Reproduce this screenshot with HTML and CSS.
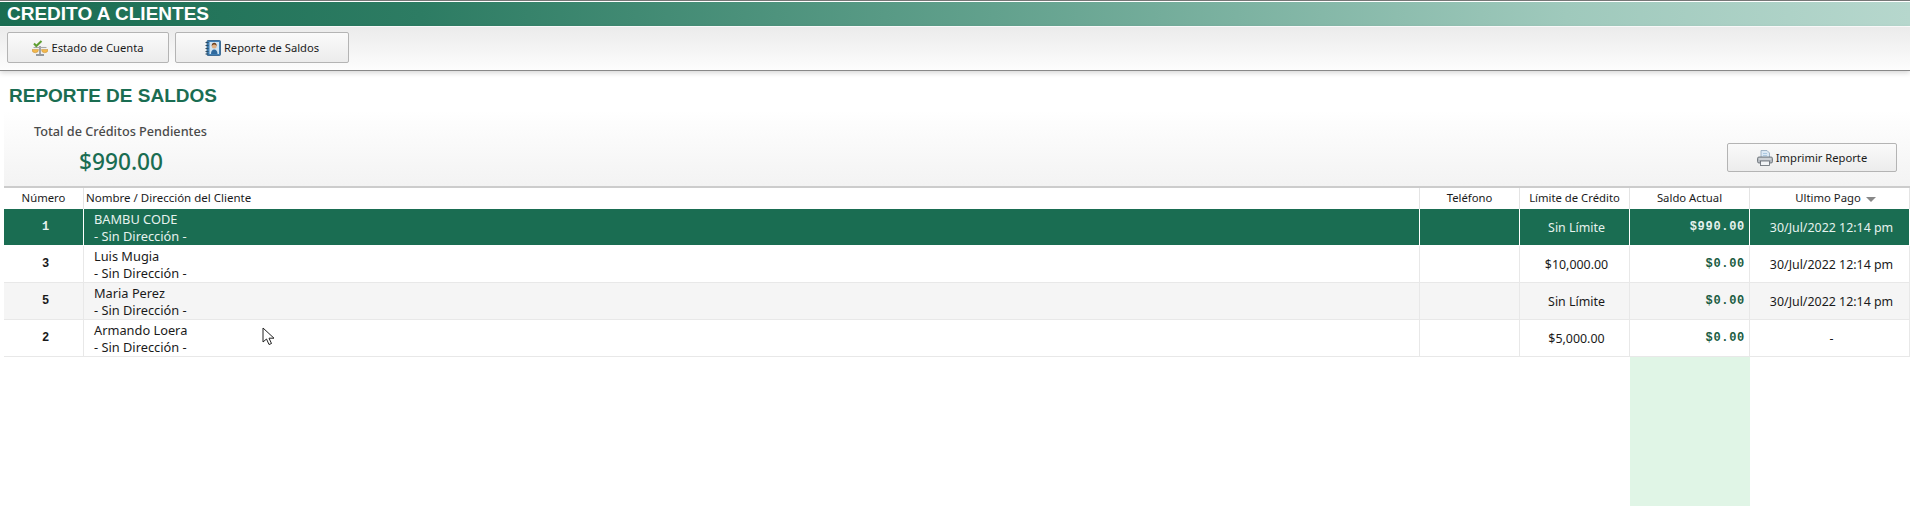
FILE: index.html
```html
<!doctype html>
<html lang="es">
<head>
  <meta charset="UTF-8" />
  <title>Credito a Clientes</title>
  <link rel="stylesheet" href="styles.css">
</head>
<body>
  <!-- Title bar -->
  <header class="app-title">CREDITO A CLIENTES</header>

  <!-- Toolbar -->
  <div class="toolbar">
    <button class="btn btn-estado">
      <svg class="btn-icon" width="16" height="16" viewBox="0 0 16 16" aria-hidden="true">
        <path d="M8 6v8" stroke="#8a8f94" stroke-width="1.6" fill="none"/>
        <path d="M4 15h8" stroke="#7d8389" stroke-width="1.6"/>
        <path d="M1.500 7.500h13" stroke="#a8a8a8" stroke-width="1.100"/>
        <path d="M0 9.500h6.500a3.250 3.250 0 0 1-6.500 0zM9.500 9.500H16a3.250 3.250 0 0 1-6.500 0z" fill="#f3b74a" stroke="#c08f3c" stroke-width=".5"/>
        <path d="M2 3.500l2.300 2.500L9.500 1" stroke="#5f9e32" stroke-width="2" fill="none"/>
      </svg>
      Estado de Cuenta
    </button>
    <button class="btn btn-reporte">
      <svg class="btn-icon" width="16" height="16" viewBox="0 0 16 16" aria-hidden="true">
        <rect x="2" y="0.500" width="13.500" height="15" rx="1" fill="#3f7fb5" stroke="#2b5a85" stroke-width=".8"/>
        <rect x="4.500" y="2" width="9.500" height="12" fill="#cfe3f2"/>
        <path d="M0.500 2.500h3M0.500 5.500h3M0.500 8.500h3M0.500 11.500h3M0.500 14h3" stroke="#2e4f66" stroke-width="1.100"/>
        <path d="M6 14c0-3 1.200-4.500 3.200-4.500S12.500 11 12.500 14z" fill="#2f6a9e"/>
        <circle cx="9.200" cy="6" r="2.500" fill="#e0b083"/>
        <path d="M6.700 6c0-2.200 1-3.200 2.500-3.200s2.500 1 2.500 3.200c-.8-1-2-1.400-2.500-1.400S7.500 5 6.700 6z" fill="#6b3f1e"/>
      </svg>
      Reporte de Saldos
    </button>
  </div>

  <main class="content">
    <h1 class="page-title">REPORTE DE SALDOS</h1>

    <section class="summary">
      <div class="summary-total">
        <p class="summary-label">Total de Créditos Pendientes</p>
        <p class="summary-value">$990.00</p>
      </div>
      <button class="btn btn-print">
        <svg class="btn-icon" width="16" height="16" viewBox="0 0 16 16" aria-hidden="true">
          <path d="M4 .500h6l2.500 2.500v6H4z" fill="#dbe8f4" stroke="#8fa6bb" stroke-width=".8"/>
          <path d="M6 3.500h4M6 5.500h4" stroke="#9fc0dc" stroke-width=".8"/>
          <rect x="0.500" y="7" width="15" height="6" rx="1.500" fill="#b4b9bf" stroke="#61686f" stroke-width=".8"/>
          <rect x="3.500" y="11" width="9" height="4.500" fill="#f2f4f6" stroke="#61686f" stroke-width=".8"/>
          <path d="M2 9h12" stroke="#e5e8eb" stroke-width="1"/>
        </svg>
        Imprimir Reporte
      </button>
    </section>

    <table class="report">
      <colgroup>
        <col class="col-num"><col class="col-name"><col class="col-tel">
        <col class="col-limit"><col class="col-saldo"><col class="col-pago">
      </colgroup>
      <thead>
        <tr>
          <th>Número</th>
          <th class="th-name">Nombre / Dirección del Cliente</th>
          <th>Teléfono</th>
          <th>Límite de Crédito</th>
          <th>Saldo Actual</th>
          <th class="th-pago">Ultimo Pago <span class="sort-arrow"></span></th>
        </tr>
      </thead>
      <tbody>
        <tr class="selected">
          <td class="num">1</td>
          <td class="name">BAMBU CODE<br>- Sin Dirección -</td>
          <td></td>
          <td class="center">Sin Límite</td>
          <td class="saldo">$990.00</td>
          <td class="center">30/Jul/2022 12:14 pm</td>
        </tr>
        <tr>
          <td class="num">3</td>
          <td class="name">Luis Mugia<br>- Sin Dirección -</td>
          <td></td>
          <td class="center">$10,000.00</td>
          <td class="saldo">$0.00</td>
          <td class="center">30/Jul/2022 12:14 pm</td>
        </tr>
        <tr class="alt">
          <td class="num">5</td>
          <td class="name">Maria Perez<br>- Sin Dirección -</td>
          <td></td>
          <td class="center">Sin Límite</td>
          <td class="saldo">$0.00</td>
          <td class="center">30/Jul/2022 12:14 pm</td>
        </tr>
        <tr>
          <td class="num">2</td>
          <td class="name">Armando Loera<br>- Sin Dirección -</td>
          <td></td>
          <td class="center">$5,000.00</td>
          <td class="saldo">$0.00</td>
          <td class="center">-</td>
        </tr>
        <tr class="filler">
          <td></td><td></td><td></td><td></td><td class="saldo-fill"></td><td></td>
        </tr>
      </tbody>
    </table>
  </main>

  <!-- Mouse pointer caught in the capture -->
  <svg class="pointer" width="13" height="20" viewBox="0 0 13 20" aria-hidden="true">
    <path d="M1 1v14l3.500-3 2.500 5.500 2.500-1-2.500-5.300H12z" fill="#fff" stroke="#222" stroke-width="1"/>
  </svg>
</body>
</html>
```

FILE: styles.css
```css
/* ------------------ Reset & Globals ------------------ */
* {
  margin: 0;
  padding: 0;
  box-sizing: border-box;
}
html, body {
  height: 506px;
  overflow: hidden;
}
body {
  font-family: 'Noto Sans', 'Open Sans', sans-serif;
  font-size: 12px;
  background: #fff;
  color: #1a1a1a;
  position: relative;
  border-top: 1px solid #777;
}

/* ------------------ Title bar ------------------ */
.app-title {
  margin-top: 1px;
  height: 24px;
  padding-left: 7px;
  font-family: 'Liberation Sans', Arial, sans-serif;
  font-weight: bold;
  font-size: 19px;
  line-height: 24px;
  color: #fff;
  background: linear-gradient(to right, #1a6d52 0%, #2d7c63 22%, #62a18d 52%, #9fc9bc 82%, #b6d7cd 100%);
}

/* ------------------ Toolbar ------------------ */
.toolbar {
  margin-top: 1px;
  height: 44px;
  padding: 5px 7px 0;
  display: flex;
  gap: 6px;
  align-items: flex-start;
  background: linear-gradient(to bottom, #ebebeb, #fdfdfd);
  border-bottom: 1px solid #888;
  box-shadow: 0 2px 5px rgba(0, 0, 0, 0.16);
}
.btn {
  display: flex;
  align-items: center;
  justify-content: center;
  gap: 3px;
  height: 31px;
  font-family: inherit;
  font-size: 11.200px;
  color: #1a1a1a;
  background: linear-gradient(to bottom, #fafafa, #ececec);
  border: 1px solid #b4b4b4;
  border-radius: 2px;
}
.btn-estado { width: 162px; }
.btn-reporte { width: 174px; }
.btn-print { width: 170px; height: 29px; margin-top: 33px; }

/* ------------------ Main Content ------------------ */
.content {
  padding: 14px 0 0 4px;
}
.page-title {
  padding-left: 5px;
  font-family: 'Liberation Sans', Arial, sans-serif;
  font-size: 19px;
  line-height: 22px;
  color: #1a6d52;
}
.summary {
  height: 78px;
  margin-top: 3px;
  padding-right: 13px;
  display: flex;
  justify-content: space-between;
  align-items: flex-start;
  background: linear-gradient(to bottom, #fff, #f3f3f3);
  border-bottom: 2px solid #ccc;
}
.summary-total {
  padding: 12px 0 0 30px;
}
.summary-label {
  font-size: 12.700px;
  font-weight: 500;
  line-height: 18px;
  color: #4a4a4a;
}
.summary-value {
  margin: 7px 0 0 45px;
  font-size: 22.700px;
  font-weight: 500;
  line-height: 30px;
  color: #1a6d52;
}

/* ------------------ Report table ------------------ */
.report {
  width: 1906px;
  table-layout: fixed;
  border-collapse: separate;
  border-spacing: 0;
}
.col-num { width: 80px; }
.col-tel { width: 100px; }
.col-limit { width: 110px; }
.col-saldo { width: 120px; }
.col-pago { width: 160px; }
.report th {
  height: 21px;
  padding-bottom: 2px;
  font-weight: normal;
  font-size: 11.300px;
  border-right: 1px solid #e4e4e4;
}
.report th.th-name {
  text-align: left;
  padding-left: 2px;
  font-size: 11.500px;
}
.report th.th-pago { padding-left: 12px; }
.sort-arrow {
  display: inline-block;
  margin-left: 2px;
  border-left: 5px solid transparent;
  border-right: 5px solid transparent;
  border-top: 5px solid #888;
}
.report td {
  height: 37px;
  border-right: 1px solid #e8e8e8;
  border-bottom: 1px solid #e8e8e8;
  font-size: 12.400px;
  line-height: 17px;
}
.report .center {
  text-align: center;
  padding-left: 4px;
}
.report .num {
  text-align: center;
  padding-left: 4px;
  font-family: 'Liberation Mono', monospace;
  font-weight: bold;
  font-size: 12px;
}
.report .name {
  padding: 2px 0 0 10px;
  font-size: 12.800px;
}
.report .saldo {
  text-align: right;
  padding-right: 4px;
  font-family: 'Liberation Mono', monospace;
  font-weight: bold;
  font-size: 12px;
  letter-spacing: 0.7px;
  color: #1a5c42;
}
.report .alt td { background: #f5f5f5; }
.report .selected td {
  background: #1a6d52;
  color: #e6f2ee;
  border-right-color: #fff;
  border-bottom-color: #fff;
}
.report .filler td {
  height: 150px;
  border: 0;
}
.report .filler .saldo-fill { background: #e0f5e6; }

/* ------------------ Pointer ------------------ */
.pointer {
  position: absolute;
  left: 262px;
  top: 326px;
}
```
